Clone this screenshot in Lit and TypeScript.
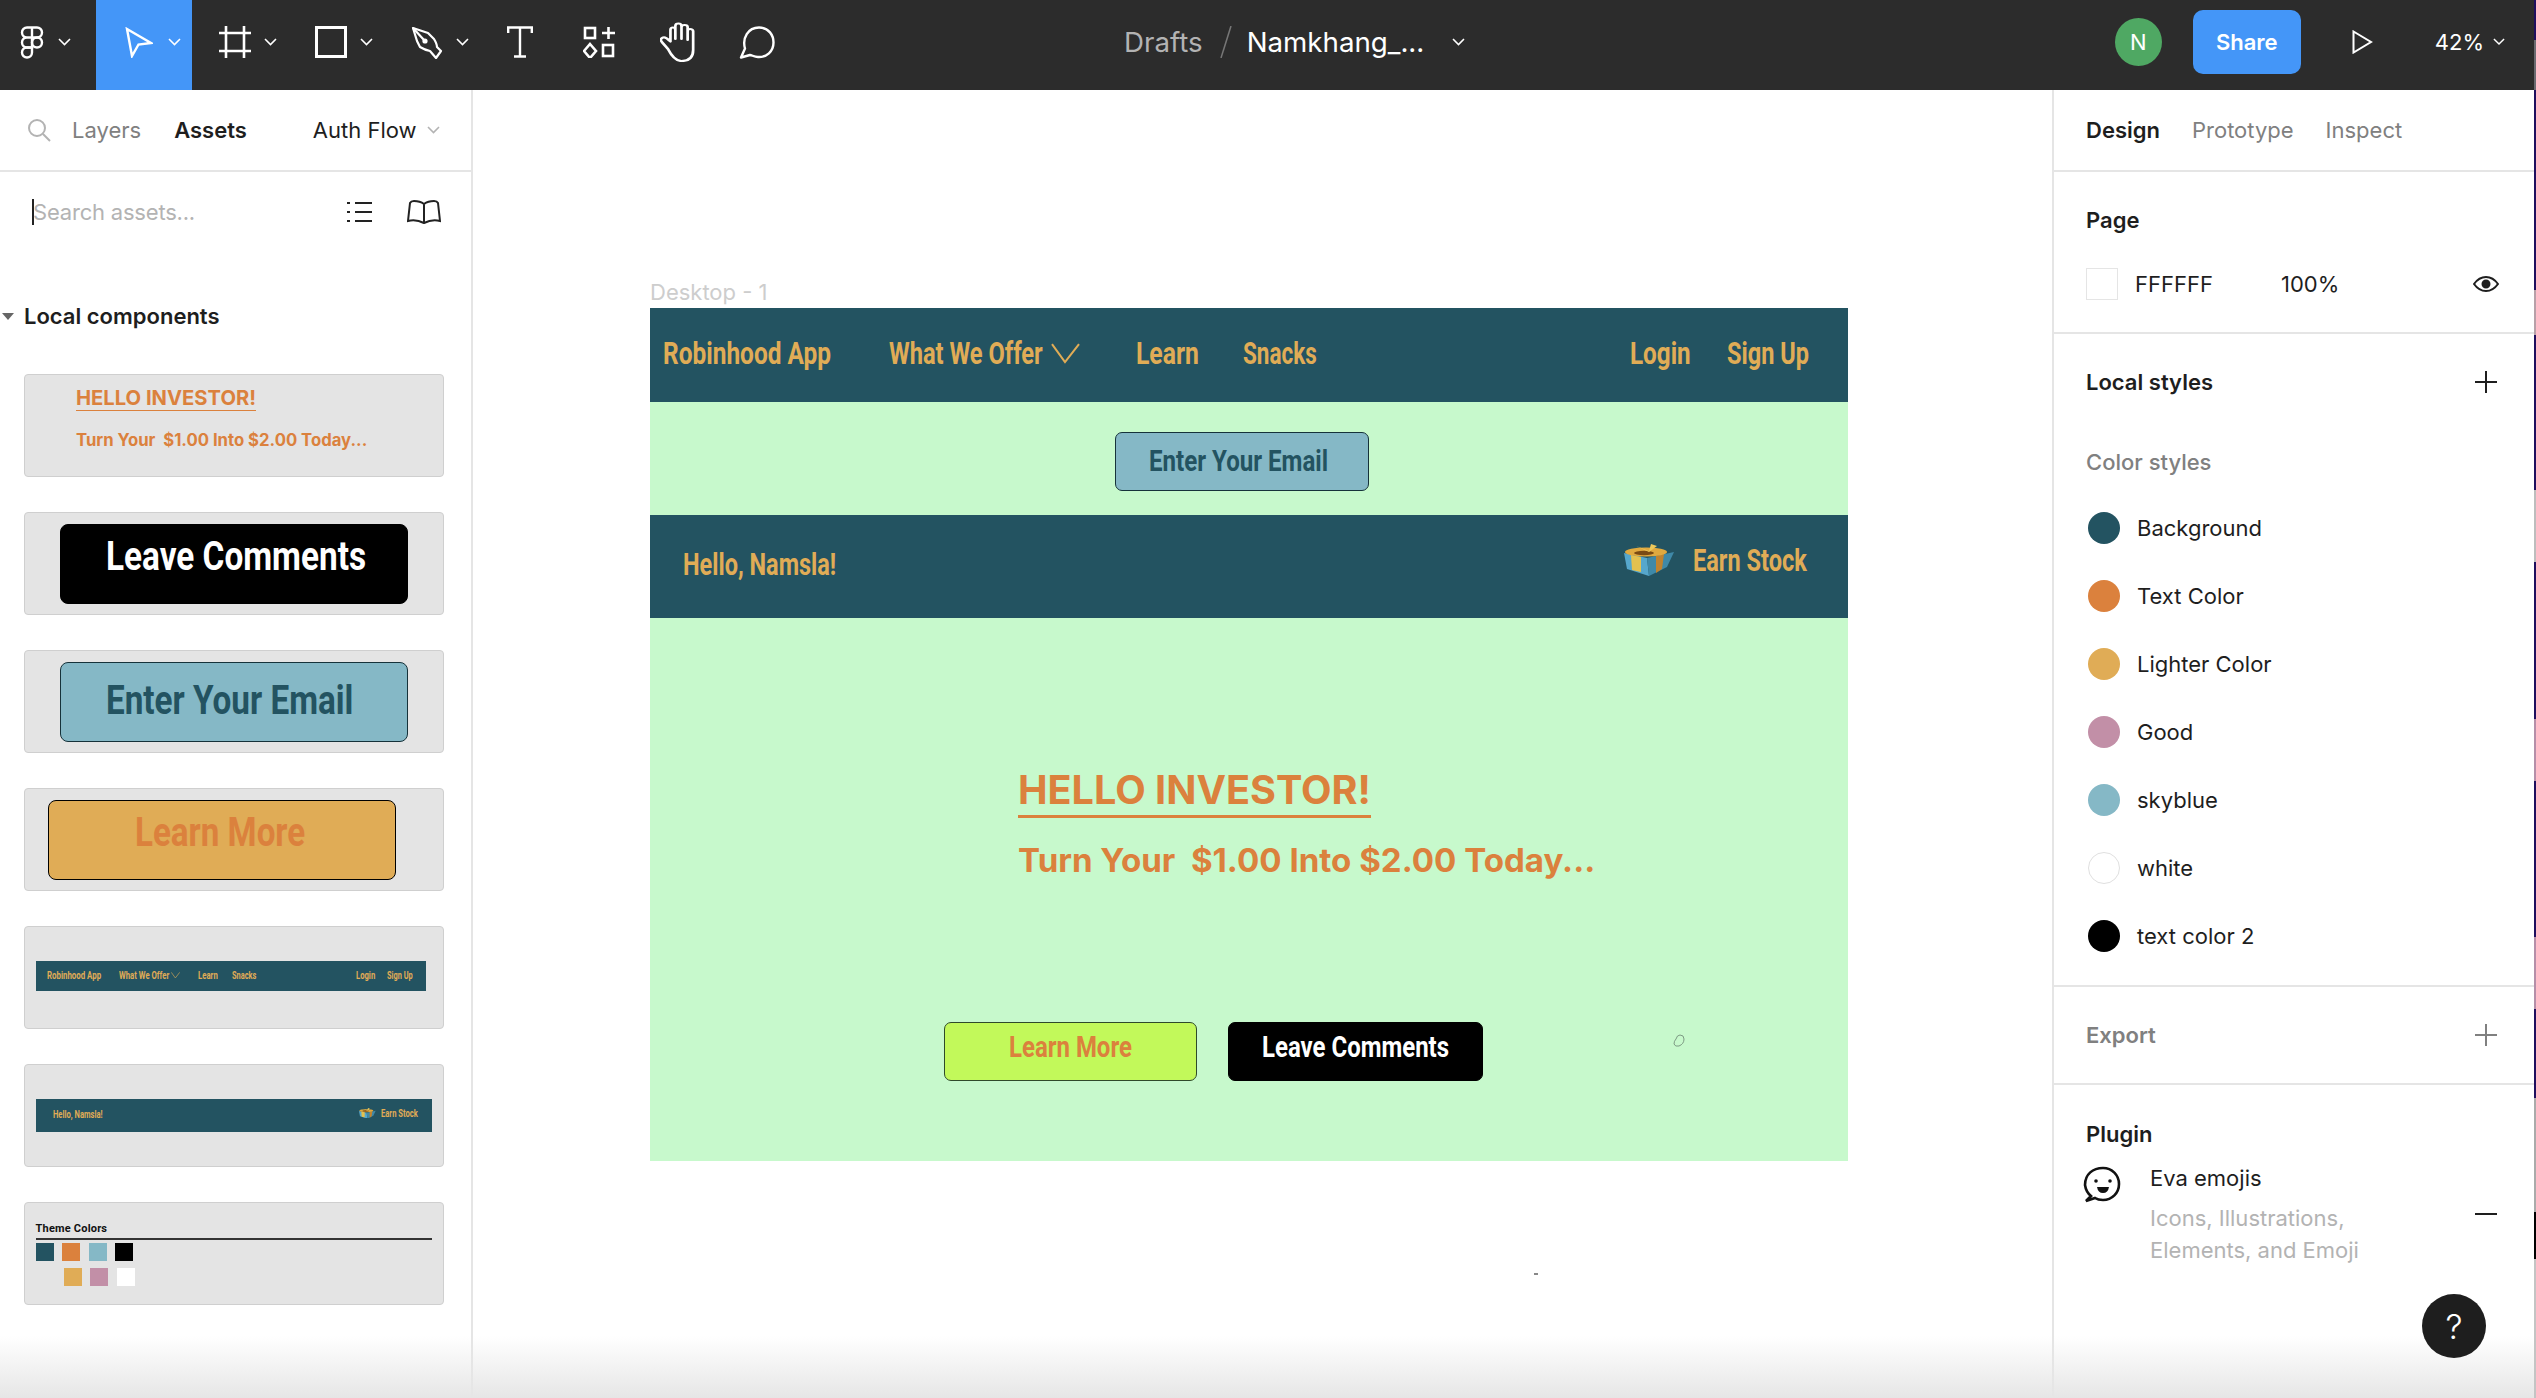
import { LitElement, html, css } from 'lit';
import { customElement } from 'lit/decorators.js';

const chev = (w = 13) => html`<svg class="chev" width=${w} height=${w * 0.62} viewBox="0 0 13 8" fill="none" stroke="currentColor" stroke-width="1.6"><path d="M1 1l5.5 5.5L12 1"/></svg>`;

const gift = (w: number) => html`<svg width=${w} height=${(w * 32) / 54} viewBox="0 0 54 32">
  <path d="M3 9l23 5 2 18-22-7z" fill="#56a7cc"/>
  <path d="M10 11l10 2v15l-9-2z" fill="#e3c14f"/>
  <path d="M26 14l27-6-7 15-18 9z" fill="#3f89a8"/>
  <path d="M35 12l8-2-2 15-6 4z" fill="#c0832f"/>
  <ellipse cx="25" cy="8" rx="21" ry="4.500" fill="#e0a93f"/>
  <ellipse cx="23" cy="9" rx="10" ry="2.200" fill="#7a4a14"/>
  <path d="M15 2l13 5 2-7 6 2-8 6z" fill="#ecc85a"/>
</svg>`;

const plus = html`<svg width="22" height="22" viewBox="0 0 22 22" stroke="currentColor" stroke-width="2"><path d="M0 11h22M11 0v22"/></svg>`;

const styleRows = [
  ['Background', '#235361'],
  ['Text Color', '#db813d'],
  ['Lighter Color', '#e0ac56'],
  ['Good', '#c28fa7'],
  ['skyblue', '#85b8c6'],
  ['white', '#ffffff'],
  ['text color 2', '#000000'],
];

@customElement('app-root')
export class AppRoot extends LitElement {
  static styles = css`
    :host {
      display: block;
      position: relative;
      width: 2536px;
      height: 1398px;
      overflow: hidden;
      background: #fff;
      font-family: Inter, 'Liberation Sans', sans-serif;
      font-size: 22px;
      color: #1e1e1e;
    }
    * { box-sizing: border-box; }

    .shell { display: flex; height: 100%; }
    .stage { flex: 1; min-width: 0; display: flex; flex-direction: column; }
    .edge {
      width: 2px;
      background: linear-gradient(180deg, #1f0f5e 0 40px, #6a6a70 40px 90px, #1f0f5e 90px 290px, #b8a0a8 290px 335px,
        #1f0f5e 335px 490px, #bdbdbd 490px 562px, #1f0f5e 562px 719px, #b58fa8 719px 781px, #1f0f5e 781px 937px,
        #b58fa8 937px 1009px, #1f0f5e 1009px 1098px, #aaa 1098px 1212px, #000 1212px 1259px, #c4c4c4 1259px);
    }

    /* top bar */
    .topbar { height: 90px; flex: none; background: #2c2c2c; color: #fff; display: flex; align-items: center; }
    .tool { height: 90px; width: 96px; flex: none; display: flex; align-items: center; padding: 0 0 6px 26px; gap: 12px; }
    .tool.logo { padding-left: 15px; gap: 9px; }
    .tool.active { background: #4496f8; }
    .tool.plain { width: 79px; padding: 0 0 6px; justify-content: center; }
    .ico { width: 34px; display: flex; justify-content: center; }
    .chev { flex: none; display: block; }
    .crumbs { margin-left: 328px; padding-bottom: 6px; display: flex; align-items: center; font-size: 27.7px; }
    .crumbs .muted { color: #b3b3b3; }
    .crumbs .slash { width: 12px; height: 32px; margin: 0 15px 0 17px; }
    .crumbs .chev { margin-left: 28px; }
    .right-tools { margin-left: auto; padding: 0 29px 6px 0; display: flex; align-items: center; }
    .avatar { width: 47px; height: 48px; border-radius: 50%; background: #4fa863; display: flex; align-items: center; justify-content: center; }
    .share { width: 108px; height: 64px; margin-left: 31px; background: #4496f8; border-radius: 10px; display: flex; align-items: center; justify-content: center; font-weight: 600; }
    .play { margin-left: 51px; display: block; }
    .zoom { margin-left: 62px; }
    .right-tools .chev { margin-left: 9px; }

    .main { flex: 1; min-height: 0; display: flex; }

    /* left panel */
    .left { width: 473px; flex: none; border-right: 2px solid #e5e5e5; }
    .tabs { height: 82px; border-bottom: 2px solid #e5e5e5; display: flex; align-items: center; }
    .left .tabs { padding-left: 28px; }
    .tab-layers { margin-left: 21px; color: #808080; }
    .tab-assets { margin-left: 33px; font-weight: 600; }
    .auth { margin-left: 66px; }
    .left .chev { margin-left: 10px; color: #b3b3b3; }
    .search { height: 80px; display: flex; align-items: center; padding-left: 32px; color: #b3b3b3; }
    .caret { width: 2px; height: 26px; background: #222; }
    .search-text { width: 314px; margin-left: -1px; letter-spacing: -0.2px; }
    .book { margin-left: 35px; }
    .section-head { margin-top: 50px; height: 28px; display: flex; align-items: center; font-weight: 600; padding-left: 2px; }
    .tri { width: 0; height: 0; border: 6px solid transparent; border-top: 7px solid #666; border-bottom: 0; margin-right: 10px; }
    .cards { margin: 44px 0 0 24px; display: flex; flex-direction: column; gap: 35px; }
    .card { width: 420px; height: 103px; background: #e4e4e4; border: 1.5px solid #cfcfcf; border-radius: 4px; }
    .card.promo { padding: 11px 0 0 51px; color: #db813d; font-weight: 700; }
    .card.promo .t { width: max-content; font-size: 20.200px; line-height: 24px; border-bottom: 1.5px solid #db813d; }
    .card.promo .s { margin-top: 18px; font-size: 16.700px; line-height: 22px; white-space: pre; }
    .card.btn-card { padding: 10.5px 0 0 34.5px; }
    .card.btn-card.gold { padding-left: 22.5px; }
    .card .btn { width: 348px; height: 80px; font-size: 40px; padding-left: 45px; border-radius: 8px; }
    .card .btn.gold { padding-left: 86px; }
    .card.bar-card { padding: 33.5px 0 0 10.5px; }
    .card.theme { padding: 17px 0 0 10.5px; }
    .theme-title { font-family: Roboto, sans-serif; font-size: 11px; letter-spacing: 0.2px; font-weight: 700; line-height: 18px; color: #111; }
    .theme-line { width: 396px; height: 2px; background: #333; }
    .swatches { display: flex; gap: 8.5px; margin-top: 3px; }
    .swatches + .swatches { margin-top: 7px; padding-left: 28px; }
    .swatches i { width: 18px; height: 18px; display: block; }

    /* condensed labels */
    .fit { display: inline-block; flex: none; white-space: nowrap; font-family: Roboto, sans-serif; font-weight: 700; }
    .fit > span { display: inline-block; transform-origin: left center; }

    /* canvas */
    .canvas { flex: 1; min-width: 0; position: relative; }
    .label { position: absolute; left: 177px; top: 189px; font-size: 22px; line-height: 26px; color: #cdcdcd; }
    .frame { position: absolute; left: 177px; top: 218px; width: 1198px; background: #c7f9cc; }
    .bar { display: flex; align-items: center; background: #235361; color: #e0ac56; font-size: 31px; }
    .bar.top { height: 94px; padding: 0 39px 3px 13px; }
    .bar.hello { height: 103px; padding: 0 41px 5px 33px; }
    .bar.mini { font-size: 10.500px; width: 390px; height: 30px; padding: 0 13px 1px 11px; }
    .bar.mini-hello { font-size: 10.500px; width: 396px; height: 33px; padding: 0 14px 1px 17px; }
    .bar svg { flex: none; }
    .up { display: flex; align-items: center; margin: 0 0 8px auto; }
    .mini-hello .up { margin-bottom: 3px; }
    .email-strip { height: 113px; display: flex; justify-content: center; padding: 30px 14px 0 0; }
    .btn { display: flex; align-items: center; border: 1.5px solid #000; }
    .btn.dark { background: #000; color: #fff; padding-bottom: 14px; }
    .btn.sky { background: #85b8c6; color: #235361; border-color: #16323a; padding-bottom: 2px; }
    .btn.gold { background: #e0ac56; color: #db813d; padding-bottom: 14px; }
    .small-btn { width: 254px; height: 59px; border-radius: 7px; font-size: 30px; padding-left: 33px; }
    .small-btn.email { padding-bottom: 2px; }
    .hero { height: 543px; position: relative; padding: 148px 0 0 368px; color: #db813d; font-weight: 700; }
    .hero h1 { margin: 0; width: max-content; font-size: 39.600px; font-weight: 700; line-height: 49px; border-bottom: 3px solid #db813d; }
    .hero p { margin: 21px 0 0; font-size: 33.100px; line-height: 42px; white-space: pre; }
    .hero-actions { display: flex; gap: 31px; margin: 141px 0 0 -74px; }
    .hero .lime { width: 253px; background: #c2f95a; color: #db813d; border-color: #2f4a2a; padding: 0 0 10px 64px; }
    .hero .black { width: 255px; padding: 0 0 10px 33px; }
    .blob { position: absolute; left: 1023px; top: 416px; }
    .dash { position: absolute; left: 1061px; top: 1183px; width: 4px; height: 2px; background: #888; }

    /* right panel */
    .rightp { width: 482px; flex: none; border-left: 2px solid #e5e5e5; }
    .rightp .tabs { padding-left: 32px; color: #808080; gap: 32px; }
    .rightp .tabs b { color: #1e1e1e; font-weight: 600; }
    .sec { padding: 34px 37px 0 32px; border-bottom: 2px solid #e5e5e5; }
    .sec:last-child { border-bottom: 0; }
    .head { display: flex; align-items: center; justify-content: space-between; height: 28px; font-weight: 600; }
    .sec.page { height: 162px; }
    .page-row { display: flex; align-items: center; margin: 34px 0 0; }
    .page-swatch { width: 32px; height: 32px; border: 1.5px solid #e5e5e5; }
    .hex { width: 146px; margin-left: 17px; }
    .pct { flex: 1; }
    .eye { margin-right: -2px; }
    .sub { margin-top: 52px; height: 28px; line-height: 28px; color: #808080; font-weight: 500; }
    .rows { margin-top: 18px; padding-bottom: 15px; }
    .row { height: 68px; display: flex; align-items: center; gap: 17px; padding-left: 2px; }
    .dot { width: 32px; height: 32px; border-radius: 50%; }
    .dot.hollow { border: 1.5px solid #e0e0e0; }
    .sec.export { height: 98px; padding-top: 34px; color: #808080; }
    .sec.plugin { padding-top: 35px; }
    .plugin-row { position: relative; display: flex; margin-top: 16px; }
    .plugin-ico { margin: 2px 0 0 -3px; }
    .plugin-text { margin-left: 29px; line-height: 32px; }
    .plugin-text div:first-child { line-height: 28px; margin-bottom: 10px; }
    .plugin-text .d { color: #b3b3b3; }
    .minus { position: absolute; right: 0; top: 49px; width: 22px; height: 2px; background: #1e1e1e; }
    .help { position: absolute; right: 50px; bottom: 40px; width: 64px; height: 64px; border-radius: 50%; background: #1e1e1e; color: #fff; font-size: 34px; font-weight: 300; display: flex; align-items: center; justify-content: center; z-index: 2; }
    .fade { position: absolute; left: 0; right: 2px; bottom: 0; height: 62px; background: linear-gradient(180deg, rgba(230, 230, 230, 0), #e6e6e6); pointer-events: none; z-index: 1; }
  `;

  updated() {
    // squeeze each label into its box, there is no condensed face installed
    this.renderRoot.querySelectorAll<HTMLElement>('.fit').forEach((box) => {
      const inner = box.firstElementChild as HTMLElement;
      inner.style.transform = `scaleX(${box.clientWidth / inner.offsetWidth})`;
    });
  }

  private fit(text: string, width: number, gap: number | 'auto' = 0) {
    const margin = gap === 'auto' ? 'auto' : `${gap}px`;
    return html`<span class="fit" style="width:${width}px;margin-left:${margin}"><span>${text}</span></span>`;
  }

  private vee(w: number, gap: number) {
    return html`<svg style="margin-left:${gap}px" width=${w} height=${w * 0.7} viewBox="0 0 29 20" fill="none" stroke="currentColor" stroke-width="2"><path d="M1 1l13 18L28 1"/></svg>`;
  }

  private topNav(mini: boolean) {
    const k = mini
      ? [54, 18, 50, 2, 9, 18, 20, 14, 24, 19, 12, 26]
      : [168, 58, 154, 8, 29, 56, 63, 44, 74, 61, 36, 82];
    return html`<div class="bar ${mini ? 'mini' : 'top'}">
      ${this.fit('Robinhood App', k[0])}
      ${this.fit('What We Offer', k[2], k[1])}
      ${this.vee(k[4], k[3])}
      ${this.fit('Learn', k[6], k[5])}
      ${this.fit('Snacks', k[8], k[7])}
      ${this.fit('Login', k[9], 'auto')}
      ${this.fit('Sign Up', k[11], k[10])}
    </div>`;
  }

  private helloNav(mini: boolean) {
    return html`<div class="bar ${mini ? 'mini-hello' : 'hello'}">
      ${this.fit('Hello, Namsla!', mini ? 50 : 153)}
      <div class="up">
        ${gift(mini ? 18 : 54)}
        ${this.fit('Earn Stock', mini ? 37 : 114, mini ? 5 : 18)}
      </div>
    </div>`;
  }

  private topbar() {
    return html`<div class="topbar">
      <div class="tool logo">
        <span class="ico"><svg width="24" height="33" viewBox="0 0 24 33" fill="none" stroke="#fff" stroke-width="2.4">
          <path d="M12 1.5H7a5 5 0 0 0 0 10h5zM12 1.5h5a5 5 0 0 1 0 10h-5zM12 11.5H7a5 5 0 0 0 0 10h5z"/><circle cx="17" cy="16.5" r="5"/><path d="M7 21.5h5v5a5 5 0 1 1-5-5z"/>
        </svg></span>${chev()}
      </div>
      <div class="tool active">
        <span class="ico"><svg width="28" height="31" viewBox="0 0 28 31" fill="none" stroke="#fff" stroke-width="2.4"><path d="M2 2l24 14-12.5 1.5L7 29z"/></svg></span>${chev()}
      </div>
      <div class="tool">
        <span class="ico"><svg width="32" height="32" viewBox="0 0 32 32" stroke="#fff" stroke-width="2.6"><path d="M7 0v32M25 0v32M0 7h32M0 25h32"/></svg></span>${chev()}
      </div>
      <div class="tool">
        <span class="ico"><svg width="32" height="32" viewBox="0 0 32 32" fill="none" stroke="#fff" stroke-width="3"><rect x="1.5" y="1.5" width="29" height="29"/></svg></span>${chev()}
      </div>
      <div class="tool">
        <span class="ico"><svg width="32" height="33" viewBox="0 0 32 33" fill="none" stroke="#fff" stroke-width="2.2" stroke-linejoin="round"><path d="M2 2l15 5 6 6q3 5 3 8l4 4-5 7-6-7q-5-1-10-4L6 15z"/><path d="M2 2l11 12"/><circle cx="14" cy="15" r="2.6" fill="#fff" stroke="none"/></svg></span>${chev()}
      </div>
      <div class="tool plain"><svg width="26" height="32" viewBox="0 0 26 32" fill="none" stroke="#fff" stroke-width="2.4"><path d="M1.2 7V1.5h23.6V7M13 1.5V31M7 30.5h12"/></svg></div>
      <div class="tool plain"><svg width="32" height="32" viewBox="0 0 32 32" fill="none" stroke="#fff" stroke-width="2.6"><rect x="2" y="2" width="10" height="10"/><path d="M19 7h13M25.5 1v12"/><path d="M7 18l6 7-6 7-6-7z"/><rect x="20" y="19" width="10" height="11"/></svg></div>
      <div class="tool plain"><svg width="35" height="40" viewBox="0.5 0 28.500 40" preserveAspectRatio="none" fill="none" stroke="#fff" stroke-width="2.2" stroke-linejoin="round"><path d="M7 27L2 20q-2-3 1-4.500q2-1 5 3l1 1V8q0-2.500 2-2.500T13 8v9V4q0-2.500 2.500-2.500T18 4v13V5q0-2 2.500-2T23 5v13V9q0-2 2-2t2.500 2v19q0 11-9.500 11-6 0-11-12z"/></svg></div>
      <div class="tool plain"><svg width="36" height="33" viewBox="0 0 36 33" fill="none" stroke="#fff" stroke-width="2.4" stroke-linejoin="round"><path d="M2 31.500l4-9C3 12 9 1.500 20 1.500c10 0 14.500 8 14.500 15 0 9-7 15-15.500 14.500-4 0-6-2-8-2z"/></svg></div>
      <div class="crumbs">
        <span class="muted">Drafts</span>
        <svg class="slash" viewBox="0 0 12 32" stroke="#777" stroke-width="1.500"><path d="M11 0L1 32"/></svg>
        <span>Namkhang_...</span>${chev(13)}
      </div>
      <div class="right-tools">
        <div class="avatar">N</div>
        <div class="share">Share</div>
        <svg class="play" width="21" height="24" viewBox="0 0 21 24" fill="none" stroke="#fff" stroke-width="2"><path d="M1.500 1.500L19 12 1.500 22.500z"/></svg>
        <span class="zoom">42%</span>${chev(12)}
      </div>
    </div>`;
  }

  private leftPanel() {
    return html`<div class="left">
      <div class="tabs">
        <svg width="23" height="23" viewBox="0 0 23 23" fill="none" stroke="#b3b3b3" stroke-width="2"><circle cx="9" cy="9" r="8"/><path d="M15 15l7 7"/></svg>
        <span class="tab-layers">Layers</span>
        <span class="tab-assets">Assets</span>
        <span class="auth">Auth Flow</span>${chev(13)}
      </div>
      <div class="search">
        <span class="caret"></span><span class="search-text">Search assets...</span>
        <svg width="25" height="22" viewBox="0 0 25 22" stroke="#222" stroke-width="2"><path d="M0 2h3M8 2h17M0 11h3M8 11h17M0 20h3M8 20h17"/></svg>
        <svg class="book" width="34" height="24" viewBox="0 0 34 24" fill="none" stroke="#222" stroke-width="2"><path d="M17 4Q13 1 7 1 4 1 3 3L1 21q8-2 16 2 8-4 16-2L31 3q-1-2-4-2-6 0-10 3zM17 4v19"/></svg>
      </div>
      <div class="section-head"><span class="tri"></span>Local components</div>
      <div class="cards">
        <div class="card promo">
          <div class="t">HELLO INVESTOR!</div>
          <div class="s">Turn Your  $1.00 Into $2.00 Today...</div>
        </div>
        <div class="card btn-card"><div class="btn dark">${this.fit('Leave Comments', 260)}</div></div>
        <div class="card btn-card"><div class="btn sky">${this.fit('Enter Your Email', 247)}</div></div>
        <div class="card btn-card gold"><div class="btn gold">${this.fit('Learn More', 170)}</div></div>
        <div class="card bar-card">${this.topNav(true)}</div>
        <div class="card bar-card">${this.helloNav(true)}</div>
        <div class="card theme">
          <div class="theme-title">Theme Colors</div>
          <div class="theme-line"></div>
          <div class="swatches">${['#235361', '#db813d', '#85b8c6', '#000'].map((c) => html`<i style="background:${c}"></i>`)}</div>
          <div class="swatches">${['#e0ac56', '#c28fa7', '#fff'].map((c) => html`<i style="background:${c}"></i>`)}</div>
        </div>
      </div>
    </div>`;
  }

  private canvas() {
    return html`<div class="canvas">
      <div class="label">Desktop - 1</div>
      <div class="frame">
        ${this.topNav(false)}
        <div class="email-strip"><div class="btn sky small-btn email">${this.fit('Enter Your Email', 179)}</div></div>
        ${this.helloNav(false)}
        <div class="hero">
          <h1>HELLO INVESTOR!</h1>
          <p>Turn Your  $1.00 Into $2.00 Today...</p>
          <div class="hero-actions">
            <div class="btn small-btn lime">${this.fit('Learn More', 123)}</div>
            <div class="btn small-btn dark black">${this.fit('Leave Comments', 187)}</div>
          </div>
          <svg class="blob" width="12" height="14" viewBox="0 0 12 14" fill="none" stroke="#7d9a83" stroke-width="1"><path d="M7 1q4 0 4 4 0 5-5 7-4 1-5-2 0-3 2-5 1-4 4-4z"/></svg>
        </div>
      </div>
      <div class="dash"></div>
    </div>`;
  }

  private rightPanel() {
    return html`<div class="rightp">
      <div class="tabs"><b>Design</b><span>Prototype</span><span>Inspect</span></div>
      <div class="sec page">
        <div class="head">Page</div>
        <div class="page-row">
          <div class="page-swatch"></div>
          <span class="hex">FFFFFF</span>
          <span class="pct">100%</span>
          <svg class="eye" width="26" height="16" viewBox="0 0 26 16" fill="none" stroke="#1e1e1e" stroke-width="2"><path d="M1 8q5-7 12-7t12 7q-5 7-12 7T1 8z"/><circle cx="13" cy="8" r="3.500" fill="#1e1e1e"/></svg>
        </div>
      </div>
      <div class="sec">
        <div class="head">Local styles${plus}</div>
        <div class="sub">Color styles</div>
        <div class="rows">
          ${styleRows.map(([name, c]) => html`<div class="row">
            <div class="dot ${c === '#ffffff' ? 'hollow' : ''}" style="background:${c}"></div>${name}
          </div>`)}
        </div>
      </div>
      <div class="sec export"><div class="head">Export${plus}</div></div>
      <div class="sec plugin">
        <div class="head">Plugin</div>
        <div class="plugin-row">
          <svg class="plugin-ico" width="38" height="38" viewBox="0 0 38 38" fill="none" stroke="#111" stroke-width="2.600"><path d="M8 30q-5-4-6-11C2 8 10 2 20 2c9 0 16 7 16 16s-7 16-16 16q-5 0-8-2l-9 3z"/><circle cx="13" cy="15" r="1.800" fill="#111" stroke="none"/><circle cx="27" cy="15" r="1.800" fill="#111" stroke="none"/><path d="M14 21h12q-1 6-6 6t-6-6z" fill="#111" stroke="none"/></svg>
          <div class="plugin-text">
            <div>Eva emojis</div>
            <div class="d">Icons, Illustrations,</div>
            <div class="d">Elements, and Emoji</div>
          </div>
          <div class="minus"></div>
        </div>
      </div>
    </div>`;
  }

  render() {
    return html`<div class="shell">
      <div class="stage">
        ${this.topbar()}
        <div class="main">${this.leftPanel()}${this.canvas()}${this.rightPanel()}</div>
      </div>
      <div class="edge"></div>
    </div>
    <div class="help">?</div>
    <div class="fade"></div>`;
  }
}
